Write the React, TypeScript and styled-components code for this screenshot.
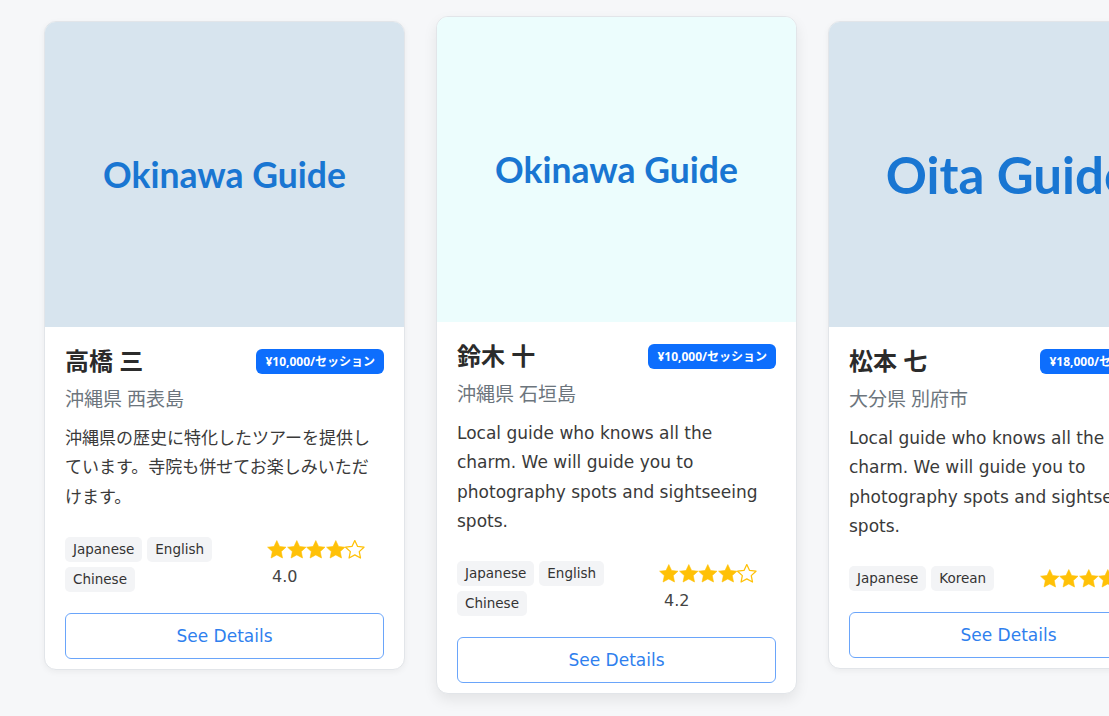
import React from "react";
import styled, { createGlobalStyle } from "styled-components";

const GlobalStyle = createGlobalStyle`
  html, body {
    margin: 0;
    padding: 0;
    background: #f6f7f9;
    overflow: hidden;
  }
  body {
    font-family: "DejaVu Sans", "Noto Sans CJK JP", sans-serif;
    color: #333;
  }
  * { box-sizing: border-box; }
`

const Page = styled.div`
  padding: 21px 0 0 44px;
  height: 716px;
`

const CardRow = styled.div`
  display: flex;
  gap: 31px;
  align-items: flex-start;
  width: max-content;
`

const Card = styled.div<{ $raised?: boolean }>`
  width: 361px;
  flex-shrink: 0;
  background: #fff;
  border: 1px solid #e2e5e9;
  border-radius: 12px;
  overflow: hidden;
  display: flex;
  flex-direction: column;
  box-shadow: ${p => p.$raised ? "0 6px 14px rgba(0,0,0,0.08)" : "0 2px 6px rgba(0,0,0,0.05)"};
  transform: ${p => p.$raised ? "translateY(-5px)" : "none"};
`

const Thumb = styled.div<{ $bg: string; $size: number }>`
  height: 305px;
  background: ${p => p.$bg};
  display: flex;
  align-items: center;
  justify-content: center;
  color: #1976d2;
  font-family: Lato, sans-serif;
  font-weight: 700;
  font-size: ${p => p.$size}px;
  white-space: nowrap;
`

const CardBody = styled.div`
  padding: 20px 20px 10px;
  display: flex;
  flex-direction: column;
`

const NameRow = styled.div`
  display: flex;
  justify-content: space-between;
  align-items: center;
`

const Name = styled.h5`
  margin: 0;
  font-family: "Noto Sans", "Noto Sans CJK JP", sans-serif;
  font-size: 24px;
  font-weight: 700;
  line-height: 28px;
  color: #2b2b2b;
`

const PriceBadge = styled.span`
  background: #0d6efd;
  color: #fff;
  font-family: "Noto Sans", "Noto Sans CJK JP", sans-serif;
  font-size: 12px;
  font-weight: 700;
  line-height: 15px;
  padding: 5px 9px;
  border-radius: 6px;
  white-space: nowrap;
`

const Location = styled.div`
  margin-top: 10px;
  font-family: "Noto Sans", "Noto Sans CJK JP", sans-serif;
  font-size: 19px;
  line-height: 29px;
  color: #6c757d;
`

const Description = styled.p`
  margin: 10px 0 0;
  font-size: 17px;
  line-height: 29.3px;
  color: #3a3a3a;
`

const Footer = styled.div`
  margin-top: 25px;
  display: flex;
  justify-content: space-between;
  align-items: center;
`

const TagList = styled.div`
  display: flex;
  flex-wrap: wrap;
  gap: 5px;
`

const Tag = styled.span`
  background: #f3f4f6;
  color: #333;
  font-size: 13.5px;
  line-height: 17px;
  padding: 4px 8px;
  border-radius: 5px;
`

const Rating = styled.div`
  display: flex;
  flex-wrap: wrap;
  align-items: center;
  row-gap: 6px;
`

const Stars = styled.div`
  display: flex;
  flex-shrink: 0;
`

const RatingValue = styled.span`
  margin-left: 5px;
  font-size: 16px;
  line-height: 24px;
  color: #444;
`

const DetailsButton = styled.button`
  margin-top: 21px;
  height: 46px;
  width: 100%;
  background: #fff;
  border: 1.5px solid #6aa5fa;
  border-radius: 6px;
  color: #2f7fee;
  font-family: "DejaVu Sans", sans-serif;
  font-size: 17px;
  cursor: pointer;
`

const STAR = "M10 0.6l2.85 6 6.55.75-4.85 4.5 1.3 6.55L10 15.2l-5.85 3.2 1.3-6.55L0.6 7.35l6.55-.75z"

const Star = ({ filled }: { filled: boolean }) => (
  <svg width="19.6" height="19.6" viewBox="0 0 20 20">
    <path
      d={STAR}
      fill={filled ? "#ffc107" : "none"}
      stroke="#ffc107"
      strokeWidth={filled ? 0.6 : 1.3}
      strokeLinejoin="round"
    />
  </svg>
)

interface Guide {
  title: string
  titleSize: number
  bg: string
  name: string
  price: string
  place: string
  text: string
  langs: string[]
  rating: number
  raised?: boolean
}

const desc = "Local guide who knows all the charm. We will guide you to photography spots and sightseeing spots."

const guides: Guide[] = [
  {
    title: "Okinawa Guide", titleSize: 35.5, bg: "#d7e4ee",
    name: "高橋 三", price: "¥10,000/セッション", place: "沖縄県 西表島",
    text: "沖縄県の歴史に特化したツアーを提供しています。寺院も併せてお楽しみいただけます。",
    langs: ["Japanese", "English", "Chinese"], rating: 4.0,
  },
  {
    title: "Okinawa Guide", titleSize: 35.5, bg: "#ecfdfd", raised: true,
    name: "鈴木 十", price: "¥10,000/セッション", place: "沖縄県 石垣島",
    text: desc, langs: ["Japanese", "English", "Chinese"], rating: 4.2,
  },
  {
    title: "Oita Guide", titleSize: 51, bg: "#d7e4ee",
    name: "松本 七", price: "¥18,000/セッション", place: "大分県 別府市",
    text: desc, langs: ["Japanese", "Korean"], rating: 4.6,
  },
]

const GuideCard = ({ g }: { g: Guide }) => (
  <Card $raised={g.raised}>
    <Thumb $bg={g.bg} $size={g.titleSize}>{g.title}</Thumb>
    <CardBody>
      <NameRow>
        <Name>{g.name}</Name>
        <PriceBadge>{g.price}</PriceBadge>
      </NameRow>
      <Location>{g.place}</Location>
      <Description>{g.text}</Description>
      <Footer>
        <TagList>
          {g.langs.map(l => <Tag key={l}>{l}</Tag>)}
        </TagList>
        <Rating>
          <Stars>
            {[1, 2, 3, 4, 5].map(i => <Star key={i} filled={i <= Math.floor(g.rating)} />)}
          </Stars>
          <RatingValue>{g.rating.toFixed(1)}</RatingValue>
        </Rating>
      </Footer>
      <DetailsButton>See Details</DetailsButton>
    </CardBody>
  </Card>
)

const App = () => {
  return (
    <Page>
      <GlobalStyle />
      <CardRow>
        {guides.map((g, i) => <GuideCard g={g} key={i} />)}
      </CardRow>
    </Page>
  )
}

export default App
